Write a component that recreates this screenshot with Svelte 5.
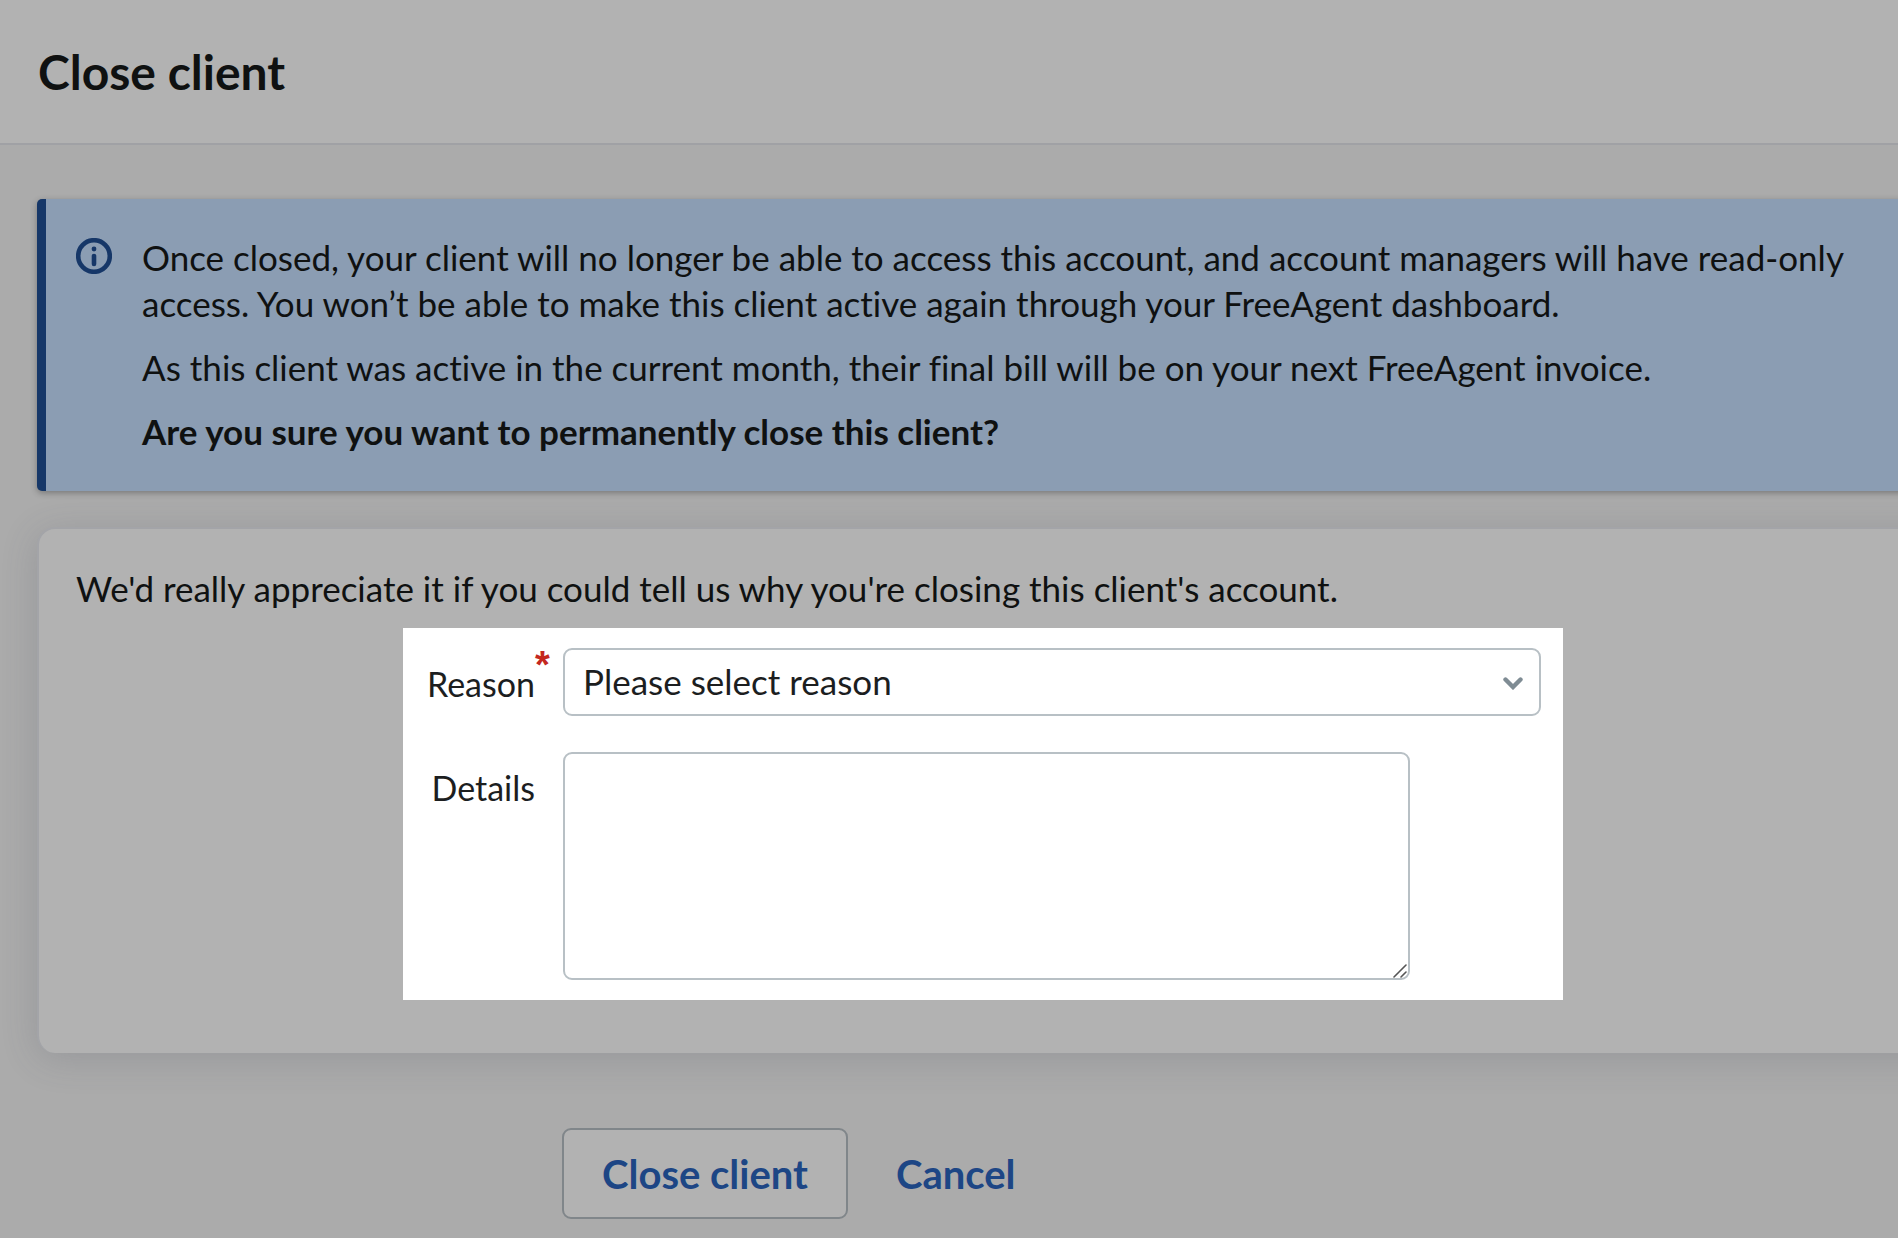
<script lang="ts">
  const REASONS = [
    { value: "", label: "Please select reason" },
  ];

  let reason = $state("");
  let details = $state("");

  function submit(e: SubmitEvent) {
    e.preventDefault();
  }
</script>

<div class="page">
  <header class="page-header">
    <h1>Close client</h1>
  </header>

  <main>
    <section class="notice">
      <svg class="notice-icon" viewBox="0 0 36 36" aria-hidden="true">
        <circle cx="18" cy="18" r="15.8" fill="none" stroke="currentColor" stroke-width="4.6" />
        <circle cx="18" cy="11" r="2.4" fill="currentColor" />
        <path d="M18 18v8" stroke="currentColor" stroke-width="4.6" stroke-linecap="round" />
      </svg>
      <div class="notice-body">
        <p>
          Once closed, your client will no longer be able to access this account, and account managers will have read-only
          access. You won’t be able to make this client active again through your FreeAgent dashboard.
        </p>
        <p>As this client was active in the current month, their final bill will be on your next FreeAgent invoice.</p>
        <p><strong>Are you sure you want to permanently close this client?</strong></p>
      </div>
    </section>

    <form id="close-client" class="card" onsubmit={submit}>
      <p class="intro">We'd really appreciate it if you could tell us why you're closing this client's account.</p>

      <div class="fields">
        <label for="reason">Reason<span class="required">*</span></label>
        <div class="control">
          <select id="reason" bind:value={reason} required>
            {#each REASONS as r}
              <option value={r.value}>{r.label}</option>
            {/each}
          </select>
          <svg class="chevron" viewBox="0 0 20 13" aria-hidden="true">
            <path d="M2.5 2.5 10 10l7.5-7.5" fill="none" stroke="currentColor" stroke-width="4.4" stroke-linecap="round" />
          </svg>
        </div>

        <label for="details">Details</label>
        <div class="control narrow">
          <textarea id="details" bind:value={details}></textarea>
          <svg class="grip" viewBox="0 0 14 14" aria-hidden="true">
            <path d="M1 13 13 1M8 13l5-5" stroke="currentColor" stroke-width="1.6" stroke-linecap="round" />
          </svg>
        </div>
      </div>
    </form>

    <div class="actions">
      <button type="submit" form="close-client">Close client</button>
      <a href="#clients">Cancel</a>
    </div>
  </main>
</div>

<style>
  :global(body) {
    background: #ababab;
  }
  .page {
    min-height: 100vh;
    overflow: hidden;
    font-family: Lato, "Liberation Sans", sans-serif;
    font-size: 35px;
    line-height: 46px;
    font-variant-ligatures: none;
    color: #0f1111;
  }
  .page-header {
    padding: 44px 38px 43px;
    background: #b2b2b2;
    border-bottom: 2px solid #a0a1a5;
  }
  h1 {
    margin: 0;
    font-size: 48px;
    line-height: 56px;
    font-weight: 700;
  }
  p { margin: 0; }
  main { padding: 54px 0 0 37px; }

  /* both panels run past the right edge of the page */
  .notice,
  .card {
    margin-right: -40px;
  }

  .notice {
    display: flex;
    gap: 30px;
    padding: 35px 80px 37px 30px;
    background: #8b9db3;
    border-left: 9px solid #163768;
    border-radius: 5px 0 0 5px;
    box-shadow: 0 2px 6px rgba(0, 0, 0, 0.3);
  }
  .notice-icon {
    flex: none;
    width: 36px;
    height: 36px;
    margin-top: 4px;
    color: #163768;
  }
  .notice-body {
    display: flex;
    flex-direction: column;
    gap: 18px;
  }

  .card {
    margin-top: 36px;
    padding: 36px 0 53px;
    background: #b2b2b2;
    border: 2px solid #a3a4a8;
    border-right: none;
    border-bottom: none;
    border-radius: 18px 0 0 18px;
    box-shadow: 0 6px 36px rgba(70, 75, 90, 0.2);
  }
  .intro { padding-left: 37px; }

  .fields {
    display: grid;
    grid-template-columns: 132px 1fr;
    column-gap: 28px;
    row-gap: 36px;
    margin: 17px 375px 0 364px;
    padding: 20px 22px 20px 0;
    background: #fff;
    color: #1c1e1f;
  }
  label {
    position: relative;
    padding-top: 13px;
    font-size: 34px;
    text-align: right;
  }
  .required {
    position: absolute;
    top: -6px;
    left: 100%;
    font-family: "Liberation Sans", sans-serif;
    font-size: 38px;
    font-weight: 700;
    color: #c4281f;
  }
  .control {
    position: relative;
    display: flex;
  }
  .narrow { margin-right: 131px; }
  select,
  textarea {
    box-sizing: border-box;
    width: 100%;
    margin: 0;
    font: inherit;
    color: inherit;
    background: #fff;
    border: 2px solid #b8c0c5;
    border-radius: 9px;
  }
  select {
    height: 68px;
    padding: 0 60px 2px 18px;
    appearance: none;
  }
  textarea {
    height: 228px;
    padding: 10px 18px;
    resize: none;
  }
  .chevron {
    position: absolute;
    top: 29px;
    right: 18px;
    width: 20px;
    height: 13px;
    color: #7f8c94;
    pointer-events: none;
  }
  .grip {
    position: absolute;
    right: 3px;
    bottom: 2px;
    width: 14px;
    height: 14px;
    color: #555;
    pointer-events: none;
  }

  .actions {
    display: flex;
    align-items: center;
    gap: 48px;
    margin: 75px 0 18px 525px;
    font-size: 40px;
    font-weight: 700;
  }
  .actions button {
    height: 91px;
    padding: 0 38px;
    font: inherit;
    color: #1d4685;
    background: #b2b2b2;
    border: 2px solid #80868a;
    border-radius: 9px;
    cursor: pointer;
  }
  .actions a {
    color: #1d4685;
    text-decoration: none;
  }
</style>
